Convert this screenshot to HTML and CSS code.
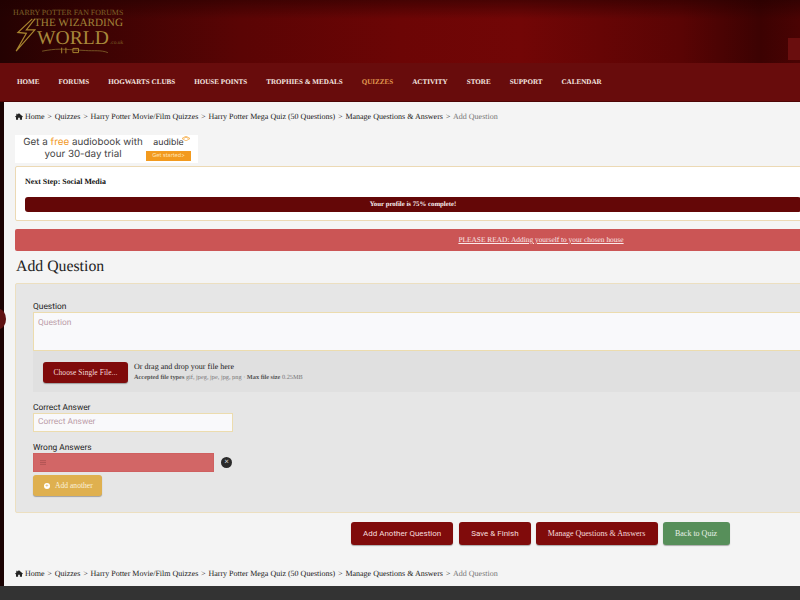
FILE: index.html
```html
<!DOCTYPE html>
<html lang="en">
<head>
    <meta charset="UTF-8">
    <title>Add Question</title>
    <link rel="stylesheet" href="styles.css">
</head>
<body>
    <header class="banner">
        <div class="logo">
            <div class="logo-top">HARRY POTTER FAN FORUMS</div>
            <div class="logo-the">THE WIZARDING</div>
            <div class="logo-world">WORLD<span class="logo-tld">.co.uk</span></div>
            <svg class="logo-bolt" viewBox="0 0 24 40" width="23" height="34">
                <path d="M20 1 L3 17 L13 18 L1 39 L23 14 L13 14 L23 1" fill="none" stroke="#a8842f" stroke-width="1.4"/>
            </svg>
            <svg class="logo-broom" viewBox="0 0 94 10" width="94" height="7">
                <path d="M0 6 C20 2 30 3 44 4 L62 5 C74 6 84 4 94 8" fill="none" stroke="#7f6128" stroke-width="1.2"/>
                <path d="M28 1 V9 M34 1 V9 M44 2 H52 V8 H44 Z" fill="none" stroke="#a8842f" stroke-width="1.4"/>
            </svg>
        </div>
        <div class="banner-tab"></div>
    </header>

    <nav class="mainnav">
        <a href="#">Home</a>
        <a href="#">Forums</a>
        <a href="#">Hogwarts Clubs</a>
        <a href="#">House Points</a>
        <a href="#">Trophies &amp; Medals</a>
        <a href="#" class="active">Quizzes</a>
        <a href="#">Activity</a>
        <a href="#">Store</a>
        <a href="#">Support</a>
        <a href="#">Calendar</a>
    </nav>

    <div class="side-handle"></div>

    <main class="content">
        <div class="crumbs">
            <svg class="home-icon" viewBox="0 0 12 10" width="8" height="7"><path d="M6 0 L12 5.2 L10.8 6 L10.5 5.7 V10 H7.3 V7 H4.7 V10 H1.5 V5.7 L1.2 6 L0 5.2 L2 3.4 V1 H3.5 V2.1 Z" fill="#222"/></svg>
            <a href="#">Home</a><i>&gt;</i><a href="#">Quizzes</a><i>&gt;</i><a href="#">Harry Potter Movie/Film Quizzes</a><i>&gt;</i><a href="#">Harry Potter Mega Quiz (50 Questions)</a><i>&gt;</i><a href="#">Manage Questions &amp; Answers</a><i>&gt;</i><span>Add Question</span>
        </div>

        <div class="ad">
            <div class="ad-text">Get a <b>free</b> audiobook with<br>your 30-day trial</div>
            <div class="ad-brand">
                <div class="ad-name">audible<svg class="ad-book" viewBox="0 0 10 6" width="8" height="5"><path d="M0 3 L5 0 L10 3 L5 6 Z M2 3 L5 1.4 L8 3" fill="none" stroke="#f29a1f" stroke-width="0.8"/></svg></div>
                <div class="ad-btn">Get started&gt;</div>
            </div>
        </div>

        <section class="profile-box">
            <div class="next-step">Next Step: Social Media</div>
            <div class="progress">Your profile is 75% complete!</div>
        </section>

        <div class="notice"><a href="#">PLEASE READ: Adding yourself to your chosen house</a></div>

        <h1>Add Question</h1>

        <form class="quiz-form">
            <label>Question</label>
            <div class="fake-input question-input">Question</div>

            <div class="dropzone">
                <button type="button" class="btn file-btn">Choose Single File...</button>
                <div class="drop-text">
                    <div class="drop-main">Or drag and drop your file here</div>
                    <div class="drop-sub"><b>Accepted file types</b> gif, jpeg, jpe, jpg, png &middot; <b>Max file size</b> 0.25MB</div>
                </div>
            </div>

            <label>Correct Answer</label>
            <div class="fake-input answer-input">Correct Answer</div>

            <label class="wrong-label">Wrong Answers</label>
            <div class="wrong-row">
                <div class="wrong-input">
                    <svg viewBox="0 0 8 6" width="6" height="5"><path d="M0 .5 H8 M0 3 H8 M0 5.5 H8" stroke="#a85050" stroke-width="1"/></svg>
                </div>
                <span class="remove">&times;</span>
            </div>
            <button type="button" class="btn add-btn"><span class="plus">+</span>Add another</button>
        </form>

        <div class="actions">
            <button type="button" class="btn big sans">Add Another Question</button>
            <button type="button" class="btn big sans">Save &amp; Finish</button>
            <button type="button" class="btn big manage">Manage Questions &amp; Answers</button>
            <button type="button" class="btn big green">Back to Quiz</button>
        </div>

        <div class="crumbs crumbs-bottom">
            <svg class="home-icon" viewBox="0 0 12 10" width="8" height="7"><path d="M6 0 L12 5.2 L10.8 6 L10.5 5.7 V10 H7.3 V7 H4.7 V10 H1.5 V5.7 L1.2 6 L0 5.2 L2 3.4 V1 H3.5 V2.1 Z" fill="#222"/></svg>
            <a href="#">Home</a><i>&gt;</i><a href="#">Quizzes</a><i>&gt;</i><a href="#">Harry Potter Movie/Film Quizzes</a><i>&gt;</i><a href="#">Harry Potter Mega Quiz (50 Questions)</a><i>&gt;</i><a href="#">Manage Questions &amp; Answers</a><i>&gt;</i><span>Add Question</span>
        </div>
    </main>

    <footer class="footer"></footer>
</body>
</html>
```

FILE: styles.css
```css
* {
    margin: 0;
    padding: 0;
    box-sizing: border-box;
}

html, body {
    height: 600px;
    overflow: hidden;
}

body {
    font-family: 'Liberation Serif', serif;
    background: #1a0202;
    color: #222;
    position: relative;
    text-rendering: geometricPrecision;
}

a {
    color: inherit;
    text-decoration: none;
}

button {
    font-family: inherit;
    border: 0;
}

/* Banner */
.banner {
    height: 63px;
    position: relative;
    background:
        linear-gradient(180deg, rgba(30, 0, 0, 0.5) 0%, rgba(30, 0, 0, 0) 30%),
        linear-gradient(90deg, #240202 0%, #3c0303 12%, #5a0404 30%, #6c0505 50%, #720606 65%, #5a0404 85%, #3c0202 95%, #4a0303 100%);
}

.logo {
    position: absolute;
    left: 13px;
    top: 8px;
    width: 112px;
}

.logo-top {
    font-size: 7.9px;
    line-height: 9px;
    color: #7f6128;
    white-space: nowrap;
}

.logo-the {
    font-size: 11.2px;
    line-height: 12px;
    margin: 0 0 0 21px;
    white-space: nowrap;
    color: #a08238;
}

.logo-world {
    font-size: 19.6px;
    line-height: 20px;
    margin-left: 24px;
    white-space: nowrap;
    color: #a8883a;
}

.logo-tld {
    font-size: 5.5px;
    margin-left: 1px;
    color: #7f6128;
}

.logo-bolt {
    position: absolute;
    left: 1px;
    top: 10px;
}

.logo-broom {
    position: absolute;
    left: 15px;
    top: 39px;
}

.banner-tab {
    position: absolute;
    right: 0;
    top: 38px;
    width: 12px;
    height: 22px;
    background: #6a0e0e;
}

/* Main menu */
.mainnav {
    height: 39px;
    display: flex;
    align-items: center;
    gap: 19px;
    padding: 0 0 0 17px;
    background: #680c0c;
    border-bottom: 1px solid #4e0505;
}

.mainnav a {
    font-size: 7.1px;
    font-weight: bold;
    text-transform: uppercase;
    color: #f7e9e2;
    white-space: nowrap;
}

.mainnav a.active {
    color: #e09a50;
}

.side-handle {
    position: absolute;
    left: -8px;
    top: 309px;
    width: 14px;
    height: 20px;
    border-radius: 50%;
    background: #5e1010;
}

/* Page body */
.content {
    margin-left: 4px;
    height: 484px;
    width: 796px;
    padding: 0 0 0 11px;
    background: #f4f4f4;
    overflow: hidden;
}

.crumbs {
    height: 12px;
    margin-top: 8px;
    display: flex;
    align-items: center;
    font-size: 8px;
    color: #222;
    white-space: nowrap;
}

.home-icon {
    margin-right: 2px;
}

.crumbs i {
    font-style: normal;
    margin: 0 2.8px;
}

.crumbs span {
    color: #777;
}

.ad {
    width: 183px;
    height: 28px;
    margin-top: 13px;
    display: flex;
    background: #fff;
    font-family: 'Inter', sans-serif;
}

.ad-text {
    width: 136px;
    padding-top: 2px;
    text-align: center;
    font-size: 9.8px;
    line-height: 12px;
    color: #444;
}

.ad-text b {
    font-weight: normal;
    color: #f29a1f;
}

.ad-brand {
    width: 45px;
    margin-left: -5px;
    text-align: center;
}

.ad-name {
    position: relative;
    height: 15px;
    font-size: 8.8px;
    line-height: 15px;
    color: #333;
}

.ad-book {
    position: absolute;
    right: 1px;
    top: 1px;
}

.ad-btn {
    height: 10px;
    margin-top: 1px;
    background: #f29a1f;
    color: #ffe2b4;
    font-size: 5.5px;
    line-height: 10px;
}

.profile-box {
    width: 800px;
    height: 55px;
    margin-top: 3px;
    padding: 9px 9px 0;
    background: #fff;
    border: 1px solid #ecd9b4;
    border-radius: 2px;
}

.next-step {
    font-size: 7.9px;
    font-weight: bold;
    line-height: 11px;
    color: #111;
}

.progress {
    width: 776px;
    height: 15px;
    margin-top: 10px;
    background: #640707;
    border-radius: 3px;
    color: #f8eeee;
    font-size: 6.8px;
    font-weight: bold;
    line-height: 15px;
    text-align: center;
}

.notice {
    width: 1052px;
    height: 22px;
    margin-top: 8px;
    background: #cb5555;
    border-radius: 2px;
    font-size: 7.4px;
    line-height: 22px;
    color: #fbeaea;
    text-align: center;
}

.notice a {
    text-decoration: underline;
}

h1 {
    font-size: 15.8px;
    font-weight: normal;
    line-height: 20px;
    margin-top: 6px;
    padding-left: 1px;
    color: #222;
}

/* Question form */
.quiz-form {
    width: 800px;
    height: 230px;
    margin-top: 6px;
    padding: 19px 0 0 17px;
    background: #e6e6e6;
    border: 1px solid #ecdfc0;
    border-radius: 2px;
    font-family: 'Roboto', sans-serif;
}

.quiz-form label {
    display: block;
    font-size: 8.4px;
    line-height: 9px;
    color: #222;
}

.fake-input {
    background: #f9f9fb;
    border: 1px solid #ecdcae;
    color: #bb9ca8;
    font-size: 8.4px;
    padding-left: 4px;
}

.question-input {
    height: 39px;
    width: 780px;
    padding-top: 5px;
}

.answer-input {
    width: 200px;
    height: 19px;
    line-height: 17px;
}

.dropzone {
    display: flex;
    align-items: flex-start;
    gap: 6px;
    width: 780px;
    height: 41px;
    padding: 11px 0 0 10px;
    background: #e0e0e0;
    margin-bottom: 12px;
    font-family: 'Liberation Serif', serif;
}

.btn {
    display: block;
    background: #800b0b;
    color: #f5dcdc;
    border-radius: 3px;
    box-shadow: 0 1px 1px rgba(0, 0, 0, 0.3);
    white-space: nowrap;
    font-family: 'Liberation Serif', serif;
}

.file-btn {
    width: 85px;
    height: 21px;
    font-size: 7.4px;
    letter-spacing: 0.1px;
}

.drop-main {
    font-size: 8px;
    line-height: 10px;
    color: #222;
}

.drop-sub {
    font-size: 6.3px;
    line-height: 9px;
    color: #777;
    margin-top: 1px;
}

.drop-sub b {
    color: #555;
}

.quiz-form .wrong-label {
    margin-top: 12px;
}

.wrong-row {
    display: flex;
    align-items: center;
    gap: 7px;
}

.wrong-input {
    width: 181px;
    height: 19px;
    padding: 6px 0 0 6px;
    background: #d26666;
    border: 1px solid #cf6060;
}

.wrong-input svg {
    display: block;
}

.remove {
    width: 11px;
    height: 11px;
    border-radius: 50%;
    background: #2a2a2a;
    color: #ddd;
    font-size: 8px;
    line-height: 10px;
    text-align: center;
    font-family: 'Liberation Sans', sans-serif;
}

.add-btn {
    width: 69px;
    height: 21px;
    margin-top: 3px;
    padding-left: 11px;
    display: flex;
    align-items: center;
    background: #dfb04f;
    color: #fbf1dc;
    font-size: 7.6px;
}

.plus {
    width: 6px;
    height: 6px;
    margin-right: 5px;
    border-radius: 50%;
    background: #fff;
    color: #dfb04f;
    font-size: 6px;
    font-weight: bold;
    line-height: 6px;
    text-align: center;
}

/* Bottom buttons */
.actions {
    display: flex;
    gap: 6px;
    margin-top: 9px;
    padding-left: 336px;
}

.big {
    height: 23px;
    padding: 0 12px;
    font-size: 8px;
}

.big.sans {
    font-family: 'Roboto', sans-serif;
}

.big.manage {
    width: 122px;
    padding: 0;
    margin-left: -1px;
}

.big.green {
    width: 67px;
    padding: 0;
    margin-left: -1px;
    background: #578f5a;
    color: #eaf2ea;
}

.crumbs-bottom {
    margin-top: 22px;
}

.footer {
    height: 14px;
    background: #333;
}
```
